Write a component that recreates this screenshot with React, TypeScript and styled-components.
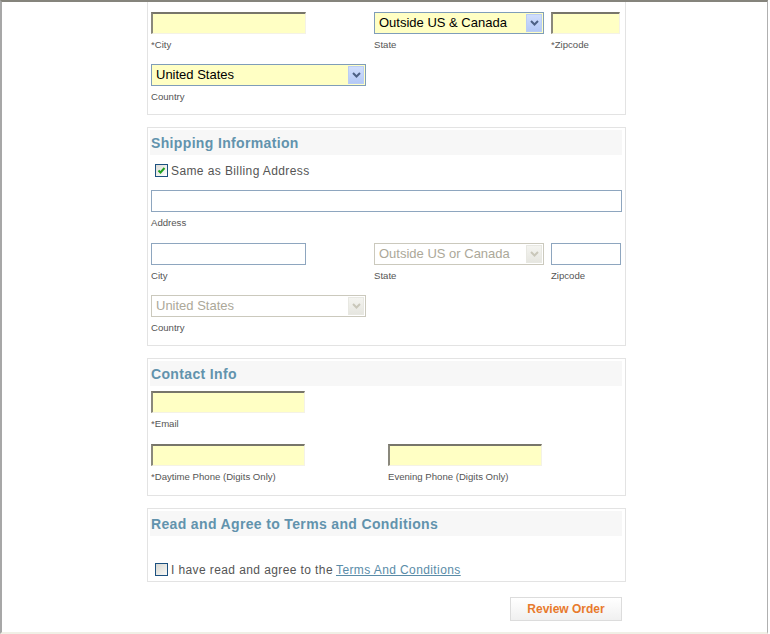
import React from "react";
import styled, { createGlobalStyle, css } from "styled-components";

const Global = createGlobalStyle`
  html, body { margin: 0; padding: 0; background: #ffffff; }
  body { font-family: "Liberation Sans", Arial, sans-serif; }
`;

const Frame = styled.div`
  box-sizing: border-box;
  width: 768px;
  height: 634px;
  overflow: hidden;
  border-top: 2px solid #85847c;
  border-left: 2px solid #a7a7a7;
  border-right: 1px solid #b0b0b0;
  border-bottom: 2px solid #f0f0e6;
  background: #ffffff;
`;

const Column = styled.div`
  width: 479px;
  margin-left: 145px;
  display: flex;
  flex-direction: column;
  gap: 12px;
`;

const Panel = styled.section<{ $top?: number; $bottom?: number; $pullUp?: number }>`
  box-sizing: border-box;
  border: 1px solid #e3e3e3;
  padding: ${(p) => p.$top ?? 2}px 3px ${(p) => p.$bottom ?? 12}px 3px;
  margin-top: ${(p) => (p.$pullUp ? -p.$pullUp : 0)}px;
  display: flex;
  flex-direction: column;
`;

const Heading = styled.h2`
  margin: 0 0 0 -1px;
  height: 25px;
  padding-left: 1px;
  background: #f7f7f7;
  display: flex;
  align-items: center;
  font-size: 14px;
  font-weight: bold;
  color: #6293ad;
  letter-spacing: 0.35px;
`;

const Rows = styled.div<{ $top?: number; $gap?: number }>`
  margin-top: ${(p) => p.$top ?? 0}px;
  display: flex;
  flex-direction: column;
  gap: ${(p) => p.$gap ?? 14}px;
`;

const Row = styled.div<{ $cols: string; $extra?: number }>`
  display: grid;
  grid-template-columns: ${(p) => p.$cols};
  margin-bottom: ${(p) => p.$extra ?? 0}px;
`;

const Field = styled.div`
  display: flex;
  flex-direction: column;
`;

const Label = styled.span`
  margin-top: 4px;
  height: 12px;
  line-height: 13px;
  font-size: 9.6px;
  color: #555555;
  white-space: nowrap;
`;

const TextBox = styled.div<{ $w: number; $required?: boolean }>`
  box-sizing: border-box;
  width: ${(p) => p.$w}px;
  height: 22px;
  ${(p) =>
    p.$required
      ? css`
          background: #ffffc4;
          border-style: solid;
          border-width: 2px 1px 1px 2px;
          border-color: #77756a #f4f2e6 #f4f2e6 #8a887c;
        `
      : css`
          background: #ffffff;
          border: 1px solid #8ea6bf;
        `}
`;

const SelectBox = styled.div<{ $w: number; $disabled?: boolean }>`
  box-sizing: border-box;
  width: ${(p) => p.$w}px;
  height: 22px;
  display: flex;
  align-items: center;
  padding: 1px;
  border: 1px solid ${(p) => (p.$disabled ? "#cbc9bd" : "#7f9db9")};
  background: ${(p) => (p.$disabled ? "#ffffff" : "#ffffc4")};
`;

const SelectText = styled.span<{ $disabled?: boolean }>`
  flex: 1;
  padding-left: 3px;
  font-size: 13px;
  line-height: 20px;
  color: ${(p) => (p.$disabled ? "#aca899" : "#000000")};
  white-space: nowrap;
  overflow: hidden;
`;

const DropButton = styled.span<{ $disabled?: boolean }>`
  box-sizing: border-box;
  width: 16px;
  height: 18px;
  display: flex;
  align-items: center;
  justify-content: center;
  border: 1px solid ${(p) => (p.$disabled ? "#e8e8e2" : "#bacdf5")};
  background: ${(p) =>
    p.$disabled
      ? "linear-gradient(#f4f4f0, #e6e6e0)"
      : "linear-gradient(#d0defc, #b4c9f6)"};
  color: ${(p) => (p.$disabled ? "#c9c7ba" : "#4d6185")};
`;

const Chevron = () => (
  <svg width="9" height="6" viewBox="0 0 9 6">
    <path d="M1 1 L4.5 4.5 L8 1" fill="none" stroke="currentColor" strokeWidth="2" />
  </svg>
);

const Select = ({ w, value, disabled }: { w: number; value: string; disabled?: boolean }) => (
  <SelectBox $w={w} $disabled={disabled}>
    <SelectText $disabled={disabled}>{value}</SelectText>
    <DropButton $disabled={disabled}>
      <Chevron />
    </DropButton>
  </SelectBox>
);

const CheckRow = styled.label<{ $top: number; $bottom: number }>`
  display: flex;
  align-items: center;
  gap: 3px;
  height: 13px;
  margin: ${(p) => p.$top}px 0 ${(p) => p.$bottom}px 4px;
  font-size: 12px;
  letter-spacing: 0.4px;
  color: #555555;
  white-space: nowrap;
`;

const Box = styled.span<{ $checked?: boolean }>`
  box-sizing: border-box;
  width: 13px;
  height: 13px;
  flex: none;
  display: flex;
  align-items: center;
  justify-content: center;
  border: 1px solid #1c5180;
  background: ${(p) =>
    p.$checked ? "linear-gradient(135deg, #dcdcd7, #ffffff)" : "linear-gradient(135deg, #d8d8d2, #f8f8f6)"};
`;

const Tick = () => (
  <svg width="9" height="9" viewBox="0 0 9 9">
    <path d="M1.5 4.5 L3.5 6.5 L7.5 2" fill="none" stroke="#21a121" strokeWidth="2" />
  </svg>
);

const Link = styled.a`
  color: #5a8ca8;
  text-decoration: underline;
  margin-left: 3px;
`;

const Actions = styled.div`
  display: flex;
  justify-content: flex-end;
  padding: 3px 4px 0 0;
`;

const Button = styled.button`
  box-sizing: border-box;
  width: 112px;
  height: 24px;
  border: 1px solid #dcdcdc;
  background: linear-gradient(#ffffff, #f0f0f0);
  color: #e87a2c;
  font-family: "Liberation Sans", Arial, sans-serif;
  font-size: 12px;
  font-weight: bold;
  padding: 0;
`;

export default function App() {
  return (
    <>
      <Global />
      <Frame>
        <Column>
          <Panel $pullUp={20} $top={29}>
            <Rows>
              <Row $cols="223px 177px 1fr">
                <Field>
                  <TextBox $w={155} $required />
                  <Label>*City</Label>
                </Field>
                <Field>
                  <Select w={170} value="Outside US & Canada" />
                  <Label>State</Label>
                </Field>
                <Field>
                  <TextBox $w={69} $required />
                  <Label>*Zipcode</Label>
                </Field>
              </Row>
              <Row $cols="1fr">
                <Field>
                  <Select w={215} value="United States" />
                  <Label>Country</Label>
                </Field>
              </Row>
            </Rows>
          </Panel>

          <Panel>
            <Heading>Shipping Information</Heading>
            <CheckRow $top={9} $bottom={13}>
              <Box $checked>
                <Tick />
              </Box>
              Same as Billing Address
            </CheckRow>
            <Rows>
              <Row $cols="1fr" $extra={1}>
                <Field>
                  <TextBox $w={471} />
                  <Label>Address</Label>
                </Field>
              </Row>
              <Row $cols="223px 177px 1fr">
                <Field>
                  <TextBox $w={155} />
                  <Label>City</Label>
                </Field>
                <Field>
                  <Select w={170} value="Outside US or Canada" disabled />
                  <Label>State</Label>
                </Field>
                <Field>
                  <TextBox $w={70} />
                  <Label>Zipcode</Label>
                </Field>
              </Row>
              <Row $cols="1fr">
                <Field>
                  <Select w={215} value="United States" disabled />
                  <Label>Country</Label>
                </Field>
              </Row>
            </Rows>
          </Panel>

          <Panel $bottom={13}>
            <Heading>Contact Info</Heading>
            <Rows $top={5} $gap={15}>
              <Row $cols="1fr">
                <Field>
                  <TextBox $w={154} $required />
                  <Label>*Email</Label>
                </Field>
              </Row>
              <Row $cols="237px 1fr">
                <Field>
                  <TextBox $w={154} $required />
                  <Label>*Daytime Phone (Digits Only)</Label>
                </Field>
                <Field>
                  <TextBox $w={154} $required />
                  <Label>Evening Phone (Digits Only)</Label>
                </Field>
              </Row>
            </Rows>
          </Panel>

          <Panel $bottom={5}>
            <Heading>Read and Agree to Terms and Conditions</Heading>
            <CheckRow $top={27} $bottom={0}>
              <Box />
              <span>
                I have read and agree to the
                <Link href="#terms">Terms And Conditions</Link>
              </span>
            </CheckRow>
          </Panel>

          <Actions>
            <Button type="button">Review Order</Button>
          </Actions>
        </Column>
      </Frame>
    </>
  );
}
